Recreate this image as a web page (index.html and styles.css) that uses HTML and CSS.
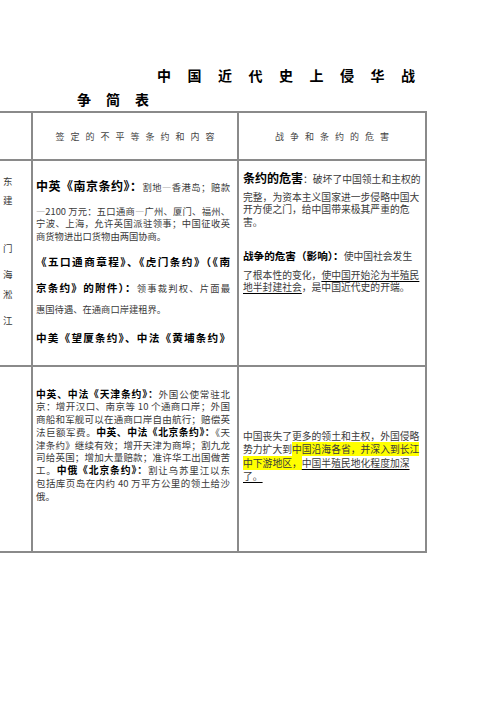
FILE: index.html
```html
<!DOCTYPE html>
<html lang="zh-CN">
<head>
<meta charset="utf-8">
<title>中国近代史上侵华战争简表</title>
<link rel="stylesheet" href="styles.css">
</head>
<body>
<div class="page">
  <h1 class="title"><span class="t1">中国近代史上侵华战</span><span class="t2">争简表</span></h1>
  <div class="tbl">
    <div class="c c-left"></div>
    <div class="c c-head"><span>签定的不平等条约和内容</span></div>
    <div class="c c-head"><span>战争和条约的危害</span></div>

    <div class="c c-left r1-left">
      <div class="ln">东</div>
      <div class="ln s6">建</div>
      <div class="ln s35">门</div>
      <div class="ln s13">海</div>
      <div class="ln s7">淞</div>
      <div class="ln s13">江</div>
    </div>
    <div class="c c-mid r1-mid">
      <div class="ln j"><b class="big">中英《南京条约》：</b>割地<span class="fw">—</span>香港岛；赔款</div>
      <div class="ln j s12"><span class="fw">—</span>2100 万元：五口通商<span class="fw">—</span>广州、厦门、福州、</div>
      <div class="ln j">宁波、上海，允许英国派驻领事；中国征收英</div>
      <div class="ln">商货物进出口货物由两国协商。</div>
      <div class="ln j s13"><b>《五口通商章程》、《虎门条约》（《南</b></div>
      <div class="ln j s13"><b>京条约》的附件）：</b>领事裁判权、片面最</div>
      <div class="ln s8">惠国待遇、在通商口岸建租界。</div>
      <div class="ln j s16"><b>中美《望厦条约》、中法《黄埔条约》</b></div>
    </div>
    <div class="c c-right r1-right">
      <div class="ln"><b class="big">条约的危害</b>：破坏了中国领土和主权的</div>
      <div class="ln s6">完整，为资本主义国家进一步侵略中国大</div>
      <div class="ln">开方便之门，给中国带来极其严重的危</div>
      <div class="ln">害。</div>
      <div class="ln s21"><b>战争的危害（影响）：</b>使中国社会发生</div>
      <div class="ln s6">了根本性的变化，<u>使中国开始沦为半殖民</u></div>
      <div class="ln"><u>地半封建社会</u>，是中国近代史的开端。</div>
    </div>

    <div class="c c-left"></div>
    <div class="c c-mid r2-mid">
      <div class="ln j"><b>中英、中法《天津条约》：</b>外国公使常驻北</div>
      <div class="ln j">京：增开汉口、南京等 10 个通商口岸；外国</div>
      <div class="ln j">商船和军舰可以在通商口岸自由航行；赔偿英</div>
      <div class="ln j">法巨额军费。<b>中英、中法《北京条约》：</b>《天</div>
      <div class="ln j">津条约》继续有效；增开天津为商埠；割九龙</div>
      <div class="ln j">司给英国；增加大量赔款；准许华工出国做苦</div>
      <div class="ln j">工。<b>中俄《北京条约》：</b>割让乌苏里江以东</div>
      <div class="ln j">包括库页岛在内约 40 万平方公里的领土给沙</div>
      <div class="ln">俄。</div>
    </div>
    <div class="c c-right r2-right">
      <div class="ln">中国丧失了更多的领土和主权，外国侵略</div>
      <div class="ln">势力扩大到<mark>中国沿海各省，并深入到长江</mark></div>
      <div class="ln"><mark>中下游地区，</mark><u>中国半殖民地化程度加深</u></div>
      <div class="ln"><u>了。</u></div>
    </div>
  </div>
</div>
</body>
</html>
```
FILE: styles.css
```css
html, body {
  margin: 0;
  padding: 0;
  background: #fff;
}

body {
  font-family: "Noto Sans CJK SC", "Noto Sans", sans-serif;
  color: #3a3a3a;
  width: 496px;
  height: 702px;
  overflow: hidden;
}

.title {
  margin: 0;
  padding-top: 63px;
  font-size: 14px;
  font-weight: 700;
  line-height: 24px;
  color: #000;
  letter-spacing: 16.5px;
}

.t1 {
  display: block;
  padding-left: 157px;
}

.t2 {
  display: block;
  padding-left: 77px;
  letter-spacing: 15px;
}

.tbl {
  display: grid;
  grid-template-columns: 53px 206px 188px;
  grid-template-rows: 48px 206px 186px;
  margin-left: -20px;
  width: 447px;
  border-top: 2px solid #8a8a8a;
}

.c {
  box-sizing: border-box;
  border-right: 2px solid #8a8a8a;
  border-bottom: 2px solid #8a8a8a;
  font-size: 9.5px;
}

.c-head {
  display: flex;
  align-items: center;
  justify-content: center;
  font-size: 9px;
  color: #444;
  letter-spacing: 6px;
  padding-left: 6px;
}

.ln {
  line-height: 12.5px;
  height: 12.5px;
}

.j {
  text-align: justify;
  text-align-last: justify;
}

.fw {
  font-feature-settings: "fwid";
}

b {
  font-weight: 700;
  color: #000;
  font-size: 10.6px;
}

b.big {
  font-size: 12px;
}

u {
  text-decoration: underline;
  text-decoration-color: #000;
  text-decoration-thickness: 1px;
  text-underline-offset: 2px;
}

mark {
  background: #ffff00;
  color: #3a3a3a;
}

.s6 { margin-top: 6.5px; }
.s7 { margin-top: 7.5px; }
.s8 { margin-top: 8.5px; }
.s12 { margin-top: 12.5px; }
.s13 { margin-top: 13.5px; }
.s16 { margin-top: 16.5px; }
.s21 { margin-top: 21.5px; }
.s35 { margin-top: 35.5px; }

.r1-left {
  padding: 13.75px 0 0 23px;
  font-size: 9.5px;
}

.r1-mid {
  padding: 18.75px 7px 0 3px;
  font-size: 9.3px;
}

.r1-right {
  padding: 10.75px 4px 0 4px;
  font-size: 9.8px;
}

.r2-mid {
  padding: 20.5px 7px 0 3px;
  font-size: 9.5px;
}

.r2-mid .ln {
  line-height: 12.75px;
  height: 12.75px;
}

.r2-mid b {
  font-size: 9.8px;
}

.r2-right {
  padding: 63px 4px 0 4px;
  font-size: 9.8px;
}

.r2-right .ln {
  line-height: 13.3px;
  height: 13.3px;
}
```
